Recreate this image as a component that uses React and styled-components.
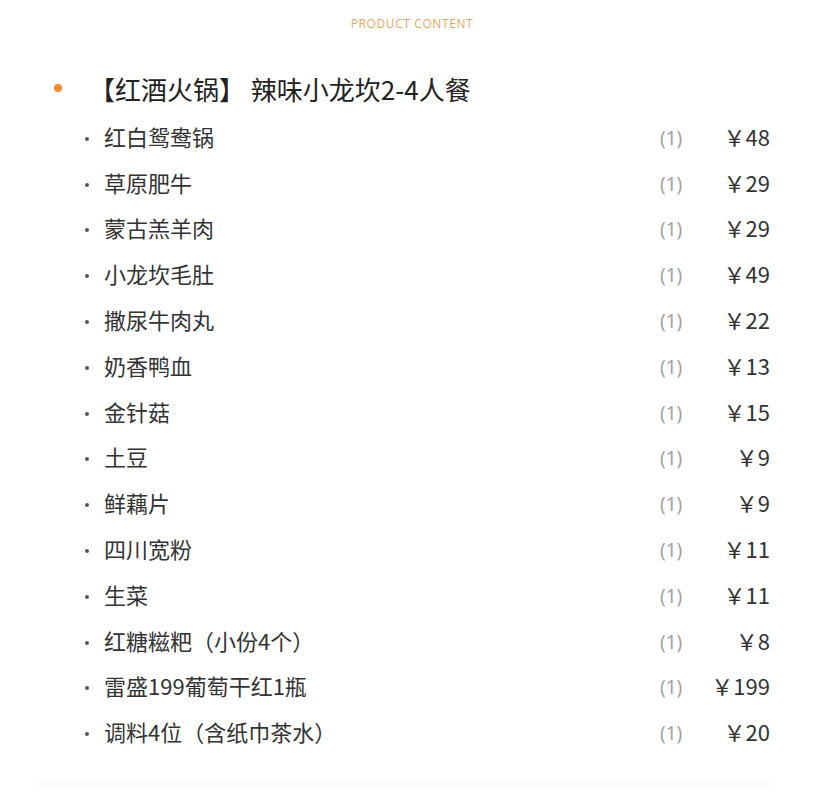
import React from 'react';
import styled, { createGlobalStyle } from 'styled-components';

const GlobalStyle = createGlobalStyle`
    body {
        margin: 0;
        background: #ffffff;
        font-family: "Noto Sans CJK SC", "Noto Sans", sans-serif;
    }
`;

const items = [
    { name: '红白鸳鸯锅', qty: 1, price: 48 },
    { name: '草原肥牛', qty: 1, price: 29 },
    { name: '蒙古羔羊肉', qty: 1, price: 29 },
    { name: '小龙坎毛肚', qty: 1, price: 49 },
    { name: '撒尿牛肉丸', qty: 1, price: 22 },
    { name: '奶香鸭血', qty: 1, price: 13 },
    { name: '金针菇', qty: 1, price: 15 },
    { name: '土豆', qty: 1, price: 9 },
    { name: '鲜藕片', qty: 1, price: 9 },
    { name: '四川宽粉', qty: 1, price: 11 },
    { name: '生菜', qty: 1, price: 11 },
    { name: '红糖糍粑（小份4个）', qty: 1, price: 8 },
    { name: '雷盛199葡萄干红1瓶', qty: 1, price: 199 },
    { name: '调料4位（含纸巾茶水）', qty: 1, price: 20 }
];

const Page = styled.div`
    width: 824px;
    height: 800px;
    padding-top: 16px;
    box-sizing: border-box;
    overflow: hidden;
`;

const Title = styled.div`
    text-align: center;
    font-family: "Open Sans", "Liberation Sans", sans-serif;
    font-size: 12px;
    line-height: 16px;
    letter-spacing: 0.6px;
    color: #e3a75c;
`;

const Section = styled.section`
    margin-top: 38px;
    padding: 0 54px;
`;

const Header = styled.h2`
    display: flex;
    align-items: center;
    margin: 0;
    height: 36px;
    font-size: 26px;
    font-weight: 400;
    color: #222;
`;

const Dot = styled.span`
    width: 8px;
    height: 8px;
    border-radius: 50%;
    background: #f28b2c;
    margin-right: 27px;
    flex-shrink: 0;
`;

const List = styled.ul`
    list-style: none;
    margin: 7px 0 0;
    padding: 0;
`;

const Row = styled.li`
    display: flex;
    align-items: center;
    height: 45.8px;
    padding-left: 31px;
`;

const Bullet = styled.span`
    width: 4px;
    height: 4px;
    border-radius: 50%;
    background: #555;
    margin: 6px 15px 0 0;
    flex-shrink: 0;
`;

const Name = styled.span`
    flex: 1;
    font-size: 22px;
    color: #333;
`;

const Qty = styled.span`
    width: 34px;
    padding-top: 4px;
    font-family: "Noto Sans", sans-serif;
    font-size: 19px;
    color: #a2a2a2;
`;

const Price = styled.span`
    width: 76px;
    text-align: right;
    font-size: 22px;
    color: #333;
`;

const Shade = styled.div`
    margin: 26px 54px 0 36px;
    height: 9px;
    background: #fcfcfc;
`;

const App = () => (
    <Page>
        <GlobalStyle />
        <Title>PRODUCT CONTENT</Title>
        <Section>
            <Header>
                <Dot />
                【红酒火锅】 辣味小龙坎2-4人餐
            </Header>
            <List>
                {items.map(item => (
                    <Row key={item.name}>
                        <Bullet />
                        <Name>{item.name}</Name>
                        <Qty>({item.qty})</Qty>
                        <Price>￥{item.price}</Price>
                    </Row>
                ))}
            </List>
        </Section>
        <Shade />
    </Page>
);

export default App;
